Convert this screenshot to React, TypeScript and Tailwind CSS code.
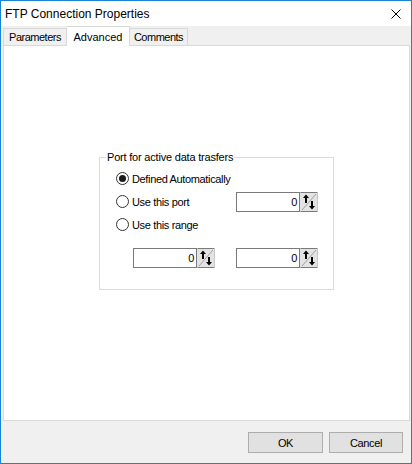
import React from "react";

const narrow = "text-[11px] tracking-[-0.35px]";

function Radio({ checked }: { checked?: boolean }) {
  return (
    <div className="w-[13px] h-[13px] rounded-full border border-[#333333] bg-white flex items-center justify-center shrink-0">
      {checked && <div className="w-[7px] h-[7px] rounded-full bg-[#1a1a1a]" />}
    </div>
  );
}

function SpinArrows() {
  return (
    <svg width="18" height="20" viewBox="0 0 18 20" className="block">
      <rect x="0" y="0" width="18" height="20" fill="#E3E3E3" />
      <line x1="0.5" y1="0.5" x2="17.5" y2="0.5" stroke="#7A7A7A" />
      <line x1="0.5" y1="19.5" x2="17.5" y2="19.5" stroke="#7A7A7A" />
      <line x1="17.5" y1="0.5" x2="17.5" y2="19.5" stroke="#C8C8C8" />
      <line x1="2" y1="18" x2="16" y2="2" stroke="#A0A0A0" strokeWidth="1" />
      <rect x="5" y="5" width="2" height="6" fill="#000" />
      <polygon points="3,6 6,2.5 9,6" fill="#000" />
      <rect x="11" y="9" width="2" height="6" fill="#000" />
      <polygon points="9,14 12,17.5 15,14" fill="#000" />
    </svg>
  );
}

function Spin() {
  return (
    <div className="flex h-[20px]">
      <div className={`w-[64px] h-[20px] border border-[#7A7A7A] bg-white text-right pr-[2px] leading-[18px] ${narrow}`}>
        0
      </div>
      <SpinArrows />
    </div>
  );
}

export default function App() {
  return (
    <div className="w-[412px] h-[464px] border border-[#1883D7] bg-[#F0F0F0] flex flex-col overflow-hidden font-['Liberation_Sans',Arial,sans-serif] text-black">
      {/* Title bar */}
      <div className="h-[25px] bg-white flex items-center pl-[4px] shrink-0">
        <span className="text-[12px] leading-[14px]">FTP Connection Properties</span>
        <svg width="10" height="10" viewBox="0 0 10 10" className="ml-auto mr-[10px]">
          <line x1="0.5" y1="0.5" x2="9.5" y2="9.5" stroke="#000" strokeWidth="1" />
          <line x1="9.5" y1="0.5" x2="0.5" y2="9.5" stroke="#000" strokeWidth="1" />
        </svg>
      </div>

      {/* Tabs */}
      <div className="h-[19px] flex items-end pl-[2px] shrink-0">
        <div className="w-[64px] h-[17px] border border-b-0 border-[#D9D9D9] bg-[#F0F0F0] flex items-center justify-center text-[11px] tracking-[-0.5px] leading-[14px]">
          Parameters
        </div>
        <div className="w-[63px] h-[20px] -mb-[1px] relative z-10 border border-b-0 border-l-0 border-[#D9D9D9] bg-white flex items-center justify-center text-[11px] leading-[14px]">
          Advanced
        </div>
        <div className="w-[58px] h-[17px] border border-b-0 border-l-0 border-[#D9D9D9] bg-[#F0F0F0] flex items-center justify-center text-[11px] tracking-[-0.5px] leading-[14px]">
          Comments
        </div>
      </div>

      {/* Panel */}
      <div className="ml-[2px] w-[407px] h-[376px] border border-[#D9D9D9] bg-white shrink-0 pl-[95px] pt-[104px]">
        <fieldset className={`w-[235px] h-[140px] border border-[#DCDCDC] ${narrow}`}>
          <legend className="ml-[6px] px-[1px] leading-[14px] tracking-[-0.2px]">Port for active data trasfers</legend>
          <div className="pt-[3px] flex flex-col">
            <div className="h-[23px] flex items-center pl-[16px] gap-[3px]">
              <Radio checked />
              <span className="leading-[14px]">Defined Automatically</span>
            </div>
            <div className="h-[23px] flex items-center pl-[16px]">
              <div className="w-[120px] flex items-center gap-[3px]">
                <Radio />
                <span className="leading-[14px]">Use this port</span>
              </div>
              <Spin />
            </div>
            <div className="h-[23px] flex items-center pl-[16px] gap-[3px]">
              <Radio />
              <span className="leading-[14px]">Use this range</span>
            </div>
            <div className="mt-[12px] flex pl-[33px] gap-[21px]">
              <Spin />
              <Spin />
            </div>
          </div>
        </fieldset>
      </div>

      {/* Footer */}
      <div className="flex-1 flex justify-end items-start pt-[11px] pr-[8px] gap-[6px]">
        <button className={`w-[75px] h-[21px] border border-[#ADADAD] bg-[#E1E1E1] leading-[14px] ${narrow}`}>
          OK
        </button>
        <button className={`w-[74px] h-[21px] border border-[#ADADAD] bg-[#E1E1E1] leading-[14px] ${narrow}`}>
          Cancel
        </button>
      </div>
    </div>
  );
}
